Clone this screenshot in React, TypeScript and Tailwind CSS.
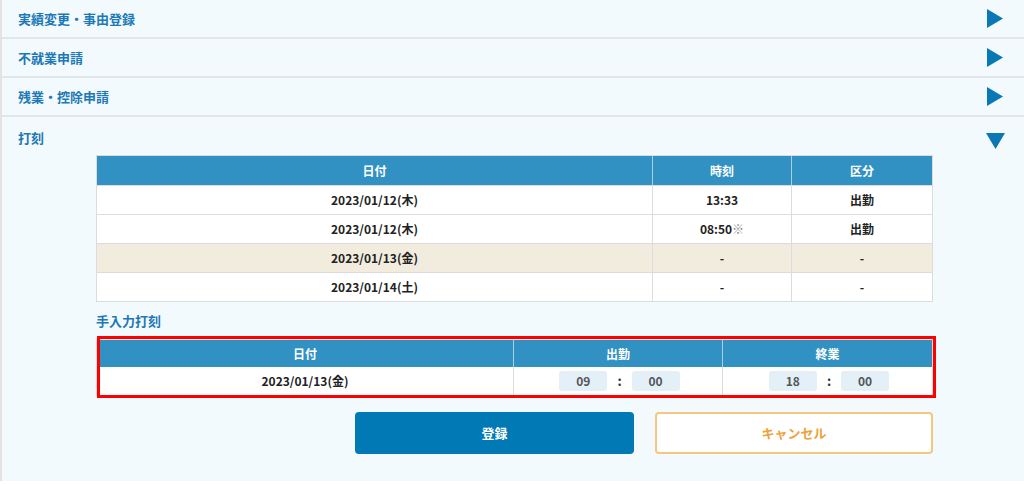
import React from "react";

const font = { fontFamily: '"Noto Sans CJK JP", "Noto Sans", sans-serif' };

function TriRight() {
  return (
    <svg width="16" height="19" viewBox="0 0 16 19" className="block">
      <polygon points="0,0 16,9.5 0,19" fill="#0a78b5" />
    </svg>
  );
}
function TriDown() {
  return (
    <svg width="19" height="16" viewBox="0 0 19 16" className="block">
      <polygon points="0,0 19,0 9.5,16" fill="#0a78b5" />
    </svg>
  );
}

function SectionRow({ title }: { title: string }) {
  return (
    <div className="flex h-[39px] items-center justify-between border-b-2 border-[#e3e6e8] pl-[16px] pr-[21px]">
      <span className="text-[13px] font-bold text-[#1c79b5]">{title}</span>
      <TriRight />
    </div>
  );
}

const rows = [
  { date: "2023/01/12(木)", time: "13:33", mark: false, kind: "出勤", bg: "bg-white" },
  { date: "2023/01/12(木)", time: "08:50", mark: true, kind: "出勤", bg: "bg-white" },
  { date: "2023/01/13(金)", time: "-", mark: false, kind: "-", bg: "bg-[#f2ecdf]" },
  { date: "2023/01/14(土)", time: "-", mark: false, kind: "-", bg: "bg-white" },
];

function TimeInputs({ h, m }: { h: string; m: string }) {
  return (
    <div className="flex items-center justify-center gap-[10px] pl-[3px]">
      <div className="flex h-[20px] w-[48px] items-center justify-center rounded-[3px] bg-[#e4f0f8] text-[12px] text-[#555]">{h}</div>
      <span className="text-[13px] font-bold text-[#333]">:</span>
      <div className="flex h-[20px] w-[48px] items-center justify-center rounded-[3px] bg-[#e4f0f8] text-[12px] text-[#555]">{m}</div>
    </div>
  );
}

export default function App() {
  return (
    <div style={font} className="h-[484px] w-[1024px] overflow-hidden bg-white">
      <div className="h-[481px] border-l-2 border-[#e3e3e3] bg-[#f3fafe]">
        <SectionRow title="実績変更・事由登録" />
        <SectionRow title="不就業申請" />
        <SectionRow title="残業・控除申請" />
        <div className="flex flex-col">
          <div className="flex items-center justify-between pl-[16px] pr-[19px] pt-[10px]">
            <span className="text-[13px] font-bold leading-[20px] text-[#1c79b5]">打刻</span>
            <div className="mt-[6px]"><TriDown /></div>
          </div>
          <div className="ml-[94px] mr-[91px] mt-[6px] flex flex-col">
            <div className="border border-[#dcdcdc]">
              <div className="grid h-[29px] grid-cols-[556px_139px_1fr] bg-[#3291c3] text-[12px] font-bold text-white">
                <div className="flex items-center justify-center border-r border-[#a9cfe3]">日付</div>
                <div className="flex items-center justify-center border-r border-[#a9cfe3]">時刻</div>
                <div className="flex items-center justify-center">区分</div>
              </div>
              {rows.map((r, i) => (
                <div key={i} className={`grid h-[29px] grid-cols-[556px_139px_1fr] border-t border-[#dcdcdc] text-[12px] font-bold text-[#222] ${r.bg}`}>
                  <div className="flex items-center justify-center border-r border-[#dcdcdc]">{r.date}</div>
                  <div className="flex items-center justify-center border-r border-[#dcdcdc]">
                    {r.time}
                    {r.mark && <span className="font-normal text-[#888]">※</span>}
                  </div>
                  <div className="flex items-center justify-center">{r.kind}</div>
                </div>
              ))}
            </div>
            <div className="mt-[9px] text-[13px] font-bold leading-[20px] text-[#1c79b5]">手入力打刻</div>
            <div className="relative mt-[8px]">
              <div className="border border-[#dcdcdc] bg-white">
                <div className="grid h-[27px] grid-cols-[417px_209px_1fr] bg-[#3291c3] text-[12px] font-bold text-white">
                  <div className="flex items-center justify-center border-r border-[#a9cfe3]">日付</div>
                  <div className="flex items-center justify-center border-r border-[#a9cfe3]">出勤</div>
                  <div className="flex items-center justify-center">終業</div>
                </div>
                <div className="grid h-[28px] grid-cols-[417px_209px_1fr] text-[12px] font-bold text-[#222]">
                  <div className="flex items-center justify-center border-r border-[#dcdcdc]">2023/01/13(金)</div>
                  <div className="flex items-center justify-center border-r border-[#dcdcdc]">
                    <TimeInputs h="09" m="00" />
                  </div>
                  <div className="flex items-center justify-center">
                    <TimeInputs h="18" m="00" />
                  </div>
                </div>
              </div>
              <div className="pointer-events-none absolute left-[1px] right-[-3px] top-[-3px] bottom-[-2px] border-[3px] border-[#ff0000]" />
            </div>
            <div className="mt-[16px] flex justify-end gap-[21px]">
              <button className="flex h-[42px] w-[279px] items-center justify-center rounded-[4px] bg-[#0079b5] text-[13px] font-bold text-white">登録</button>
              <button className="flex h-[42px] w-[278px] items-center justify-center rounded-[4px] border-2 border-[#f3c77d] bg-white text-[13px] font-bold text-[#eea23a]">キャンセル</button>
            </div>
          </div>
        </div>
      </div>
    </div>
  );
}
